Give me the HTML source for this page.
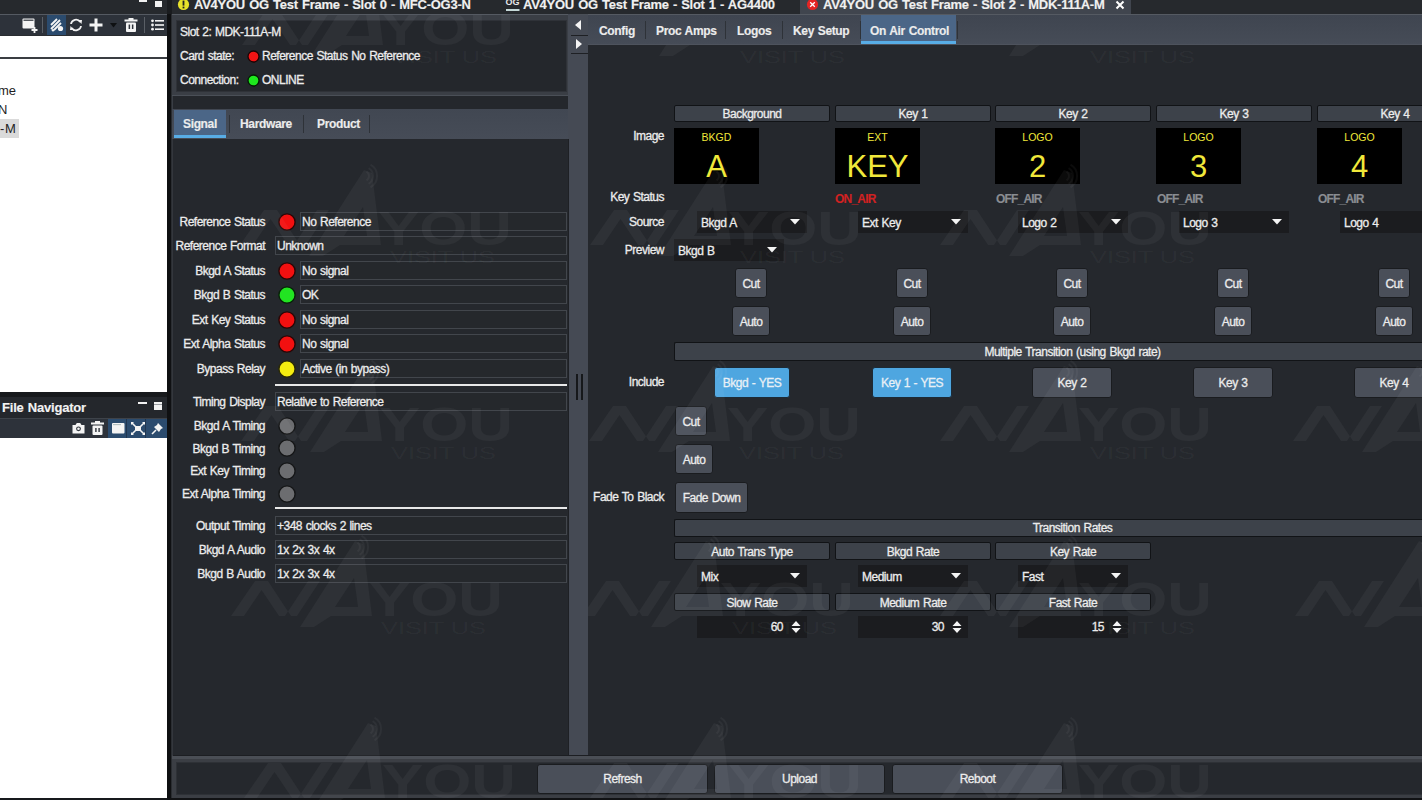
<!DOCTYPE html>
<html><head><meta charset="utf-8"><style>
html,body{margin:0;padding:0;}
body{width:1422px;height:800px;overflow:hidden;position:relative;background:#25282d;font-family:"Liberation Sans",sans-serif;}
div{position:absolute;box-sizing:border-box;}
.t{white-space:nowrap;color:#ececec;font-size:12px;line-height:14px;letter-spacing:-0.5px;word-spacing:0.8px;-webkit-text-stroke:0.3px;}
.b{font-weight:bold;letter-spacing:-0.35px;-webkit-text-stroke:0.15px;}
svg{position:absolute;}
</style></head><body>

<div style="left:0px;top:0px;width:1422px;height:14px;background:#26292d;"></div>
<div style="left:167px;top:0px;width:5px;height:14px;background:#1a1c1f;"></div>
<div style="left:800px;top:0px;width:331px;height:14px;background:#40454e;"></div>
<div style="left:139px;top:0px;width:8px;height:1.5px;background:#f2f2f2;"></div>
<div style="left:154.5px;top:0.5px;width:7.5px;height:6.5px;background:#f2f2f2;"></div>
<svg style="left:177px;top:-2px" width="13" height="13" viewBox="0 0 13 13"><circle cx="6.5" cy="6.5" r="5.6" fill="#e8e22a"/><rect x="5.6" y="2.6" width="1.8" height="5" fill="#222"/><rect x="5.6" y="8.6" width="1.8" height="1.8" fill="#222"/></svg>
<div class="t b" style="left:194px;top:-4px;font-size:13px;line-height:16px;color:#f0f0f0;letter-spacing:-0.25px;margin-top:1px;">AV4YOU OG Test Frame - Slot 0 - MFC-OG3-N</div>
<svg style="left:505px;top:0px" width="16" height="12" viewBox="0 0 16 12"><text x="0.5" y="4.8" font-family="Liberation Sans" font-weight="bold" font-size="9.5" fill="#e8e8e8" textLength="14" lengthAdjust="spacingAndGlyphs">OG</text><rect x="1" y="9" width="13.5" height="2" fill="#c5d8d8"/></svg>
<div class="t b" style="left:523px;top:-4px;font-size:13px;line-height:16px;color:#f0f0f0;letter-spacing:-0.25px;margin-top:1px;">AV4YOU OG Test Frame - Slot 1 - AG4400</div>
<svg style="left:806px;top:-2px" width="13" height="13" viewBox="0 0 13 13"><circle cx="6.5" cy="6.5" r="5.6" fill="#e42424"/><path d="M4.2 4.2 L8.8 8.8 M8.8 4.2 L4.2 8.8" stroke="#fff" stroke-width="1.3"/></svg>
<div class="t b" style="left:823px;top:-4px;font-size:13px;line-height:16px;color:#f0f0f0;letter-spacing:-0.25px;margin-top:1px;">AV4YOU OG Test Frame - Slot 2 - MDK-111A-M</div>
<svg style="left:1115px;top:0px" width="10" height="10" viewBox="0 0 10 10"><path d="M1.5 1.5 L8.5 8.5 M8.5 1.5 L1.5 8.5" stroke="#fff" stroke-width="2"/></svg>
<div style="left:0px;top:14px;width:167px;height:1px;background:#555a62;"></div>
<div style="left:0px;top:15px;width:167px;height:20px;background:#2d323a;"></div>
<div style="left:0px;top:35px;width:167px;height:763px;background:#ffffff;"></div>
<div style="left:0px;top:35px;width:167px;height:1px;background:#2a2d31;"></div>
<div style="left:167px;top:14px;width:4px;height:786px;background:#0f1012;"></div>
<div style="left:171px;top:14px;width:1px;height:786px;background:#2a2d31;"></div>
<div style="left:0px;top:798px;width:172px;height:2px;background:#17191c;"></div>
<div style="left:0px;top:57px;width:167px;height:2px;background:#3a3d42;"></div>
<svg style="left:22px;top:18px" width="16" height="15" viewBox="0 0 16 15"><rect x="0.5" y="0.5" width="12" height="10" rx="1" fill="#f4f4f4"/><rect x="1.5" y="1.6" width="10" height="1.2" fill="#2d323a"/><path d="M12.5 9 v6 M9.5 12 h6" stroke="#f4f4f4" stroke-width="1.8"/></svg>
<div style="left:42px;top:17px;width:1px;height:16px;background:#5a5f66;"></div>
<div style="left:47px;top:15px;width:19px;height:20px;background:#2b4b6e;"></div>
<svg style="left:50px;top:18px" width="14" height="14" viewBox="0 0 14 14"><path d="M1 7 L7 1 M1 11 L10 2 M4 12 L11 5" stroke="#f4f4f4" stroke-width="1.8" fill="none"/><circle cx="10.5" cy="10.5" r="2.6" fill="#f4f4f4"/><circle cx="3" cy="12.2" r="1.2" fill="#f4f4f4"/></svg>
<svg style="left:69px;top:18px" width="14" height="14" viewBox="0 0 14 14"><path d="M2 6 A5 5 0 0 1 11.2 4" stroke="#f4f4f4" stroke-width="1.8" fill="none"/><path d="M12 8 A5 5 0 0 1 2.8 10" stroke="#f4f4f4" stroke-width="1.8" fill="none"/><path d="M9 2 L13 2 L12.5 6 Z" fill="#f4f4f4"/><path d="M5 12 L1 12 L1.5 8 Z" fill="#f4f4f4"/></svg>
<svg style="left:89px;top:18px" width="14" height="14" viewBox="0 0 14 14"><path d="M7 0.5 V13.5 M0.5 7 H13.5" stroke="#f4f4f4" stroke-width="3"/></svg>
<svg style="left:110px;top:23px" width="8" height="5" viewBox="0 0 8 5"><path d="M0 0 H7 L3.5 4.5 Z" fill="#0e1012"/></svg>
<svg style="left:124px;top:18px" width="14" height="14" viewBox="0 0 14 14"><rect x="0.5" y="1.5" width="13" height="2" fill="#f4f4f4"/><rect x="4.5" y="0" width="5" height="2" fill="#f4f4f4"/><rect x="2" y="4.5" width="10" height="9.5" rx="1" fill="#f4f4f4"/><rect x="4.6" y="6.5" width="1.5" height="4.5" fill="#2d323a"/><rect x="7.9" y="6.5" width="1.5" height="4.5" fill="#2d323a"/></svg>
<div style="left:144px;top:17px;width:1px;height:16px;background:#5a5f66;"></div>
<svg style="left:151px;top:19px" width="13" height="12" viewBox="0 0 13 12"><circle cx="1.5" cy="1.8" r="1.4" fill="#f4f4f4"/><circle cx="1.5" cy="6" r="1.4" fill="#f4f4f4"/><circle cx="1.5" cy="10.2" r="1.4" fill="#f4f4f4"/><rect x="4" y="1" width="9" height="1.6" fill="#f4f4f4"/><rect x="4" y="5.2" width="9" height="1.6" fill="#f4f4f4"/><rect x="4" y="9.4" width="9" height="1.6" fill="#f4f4f4"/></svg>
<div class="t" style="left:-2px;top:83px;font-size:13px;line-height:15px;color:#1e1e1e;letter-spacing:-0.2px;-webkit-text-stroke:0;">me</div>
<div class="t" style="left:-2px;top:102px;font-size:13px;line-height:15px;color:#1e1e1e;letter-spacing:0;-webkit-text-stroke:0;">N</div>
<div style="left:0px;top:119px;width:19px;height:19px;background:#dadada;"></div>
<div class="t" style="left:0px;top:121px;font-size:13px;line-height:15px;color:#1e1e1e;letter-spacing:0.6px;-webkit-text-stroke:0;">-M</div>
<div style="left:0px;top:392px;width:167px;height:5px;background:#17191c;"></div>
<div style="left:0px;top:397px;width:167px;height:21px;background:#24272c;"></div>
<div class="t b" style="left:2px;top:400px;font-size:13px;line-height:15px;color:#f2f2f2;letter-spacing:-0.2px;">File Navigator</div>
<div style="left:138px;top:402px;width:9px;height:2px;background:#f2f2f2;"></div>
<div style="left:154px;top:402px;width:8px;height:8px;background:#f2f2f2;"></div>
<div style="left:154px;top:404px;width:8px;height:1px;background:#9a9da2;"></div>
<div style="left:0px;top:418px;width:167px;height:1px;background:#3e434a;"></div>
<div style="left:0px;top:419px;width:167px;height:19px;background:#2d323a;"></div>
<div style="left:108px;top:419px;width:59px;height:19px;background:#2b4b6e;"></div>
<svg style="left:72px;top:422px" width="13" height="12" viewBox="0 0 13 12"><path d="M0.5 3 H3.5 L4.8 1 H8.2 L9.5 3 H12.5 V11.5 H0.5 Z" fill="#f4f4f4"/><circle cx="6.5" cy="6.8" r="2.4" fill="#2d323a"/><circle cx="6.5" cy="6.8" r="1.3" fill="#f4f4f4"/></svg>
<svg style="left:91px;top:421px" width="13" height="14" viewBox="0 0 13 14"><rect x="0" y="1.5" width="13" height="2" fill="#f4f4f4"/><rect x="4" y="0" width="5" height="2" fill="#f4f4f4"/><rect x="1.5" y="4.5" width="10" height="9.5" rx="1" fill="#f4f4f4"/><rect x="4.2" y="7" width="1.4" height="4" fill="#2d323a"/><rect x="7.4" y="7" width="1.4" height="4" fill="#2d323a"/></svg>
<svg style="left:112px;top:423px" width="13" height="11" viewBox="0 0 13 11"><rect x="0" y="0" width="12.5" height="10.5" rx="1" fill="#f4f4f4"/><rect x="1" y="1.3" width="8" height="0.8" fill="#9aa"/></svg>
<svg style="left:131px;top:422px" width="14" height="13" viewBox="0 0 14 13"><path d="M1 1 L5 5 M13 1 L9 5 M1 12 L5 8 M13 12 L9 8" stroke="#f4f4f4" stroke-width="1.6"/><rect x="4" y="4" width="6" height="5" fill="#f4f4f4"/><path d="M0 0 H3 L0 3Z M14 0 H11 L14 3Z M0 13 H3 L0 10Z M14 13 H11 L14 10Z" fill="#f4f4f4"/></svg>
<div style="left:126px;top:419px;width:1px;height:19px;background:#20354f;"></div>
<div style="left:145px;top:419px;width:1px;height:19px;background:#20354f;"></div>
<svg style="left:151px;top:422px" width="13" height="13" viewBox="0 0 13 13"><path d="M7 1 L12 6 L10 7 L8 10 L3 5 L6 3 Z" fill="#f4f4f4"/><path d="M5 8 L1 12" stroke="#f4f4f4" stroke-width="1.6"/></svg>
<div style="left:172px;top:14px;width:398px;height:1px;background:#555a62;"></div>
<div style="left:172px;top:15px;width:398px;height:82px;background:#3a3e45;"></div>
<div style="left:176px;top:20px;width:391px;height:72px;background:#24272c;border:1px solid #2f3238;"></div>
<div class="t" style="left:180px;top:25px;">Slot 2: MDK-111A-M</div>
<div class="t" style="left:180px;top:49px;">Card state:</div>
<svg style="left:247px;top:50px" width="13" height="13" viewBox="0 0 13 13"><circle cx="6.5" cy="6.5" r="5.5" fill="#f21414" stroke="#1a0404" stroke-width="1.3"/></svg>
<div class="t" style="left:262px;top:49px;">Reference Status No Reference</div>
<div class="t" style="left:180px;top:73px;">Connection:</div>
<svg style="left:247px;top:74px" width="13" height="13" viewBox="0 0 13 13"><circle cx="6.5" cy="6.5" r="5.5" fill="#1ee81e" stroke="#041a04" stroke-width="1.3"/></svg>
<div class="t" style="left:262px;top:73px;">ONLINE</div>
<div style="left:172px;top:95px;width:398px;height:1px;background:#4a4f57;"></div>
<div style="left:172px;top:96px;width:398px;height:13px;background:#3a3e45;"></div>
<div style="left:173px;top:96px;width:397px;height:13px;background:#24272c;"></div>
<div style="left:172px;top:109px;width:398px;height:30px;background:linear-gradient(#414752,#464c57);"></div>
<div style="left:174px;top:110px;width:52px;height:28px;background:#4b6687;"></div>
<div style="left:174px;top:135px;width:52px;height:3px;background:#58ade6;"></div>
<div style="left:229px;top:115px;width:1px;height:18px;background:#2e3238;"></div>
<div style="left:303px;top:115px;width:1px;height:18px;background:#2e3238;"></div>
<div style="left:369px;top:115px;width:1px;height:18px;background:#2e3238;"></div>
<div class="t b" style="left:183px;top:117px;">Signal</div>
<div class="t b" style="left:240px;top:117px;">Hardware</div>
<div class="t b" style="left:317px;top:117px;">Product</div>
<div style="left:172px;top:139px;width:398px;height:616px;background:#25282d;"></div>
<div style="left:172px;top:139px;width:1px;height:616px;background:#34373d;"></div>
<div class="t" style="right:1157px;top:215px;">Reference Status</div>
<svg style="left:278px;top:212.5px" width="18" height="18" viewBox="0 0 18 18"><circle cx="9" cy="9" r="8.1" fill="#f21010" stroke="#2a0606" stroke-width="1.4"/></svg>
<div style="left:300px;top:212px;width:267px;height:19px;border:1px solid #42464c;background:#25282c;"></div>
<div class="t" style="left:302px;top:215px;">No Reference</div>
<div class="t" style="right:1157px;top:239px;">Reference Format</div>
<div style="left:275px;top:236px;width:292px;height:19px;border:1px solid #42464c;background:#25282c;"></div>
<div class="t" style="left:277px;top:239px;">Unknown</div>
<div class="t" style="right:1157px;top:264px;">Bkgd A Status</div>
<svg style="left:278px;top:261.5px" width="18" height="18" viewBox="0 0 18 18"><circle cx="9" cy="9" r="8.1" fill="#f21010" stroke="#2a0606" stroke-width="1.4"/></svg>
<div style="left:300px;top:261px;width:267px;height:19px;border:1px solid #42464c;background:#25282c;"></div>
<div class="t" style="left:302px;top:264px;">No signal</div>
<div class="t" style="right:1157px;top:288px;">Bkgd B Status</div>
<svg style="left:278px;top:285.5px" width="18" height="18" viewBox="0 0 18 18"><circle cx="9" cy="9" r="8.1" fill="#22e422" stroke="#082208" stroke-width="1.4"/></svg>
<div style="left:300px;top:285px;width:267px;height:19px;border:1px solid #42464c;background:#25282c;"></div>
<div class="t" style="left:302px;top:288px;">OK</div>
<div class="t" style="right:1157px;top:313px;">Ext Key Status</div>
<svg style="left:278px;top:310.5px" width="18" height="18" viewBox="0 0 18 18"><circle cx="9" cy="9" r="8.1" fill="#f21010" stroke="#2a0606" stroke-width="1.4"/></svg>
<div style="left:300px;top:310px;width:267px;height:19px;border:1px solid #42464c;background:#25282c;"></div>
<div class="t" style="left:302px;top:313px;">No signal</div>
<div class="t" style="right:1157px;top:337px;">Ext Alpha Status</div>
<svg style="left:278px;top:334.5px" width="18" height="18" viewBox="0 0 18 18"><circle cx="9" cy="9" r="8.1" fill="#f21010" stroke="#2a0606" stroke-width="1.4"/></svg>
<div style="left:300px;top:334px;width:267px;height:19px;border:1px solid #42464c;background:#25282c;"></div>
<div class="t" style="left:302px;top:337px;">No signal</div>
<div class="t" style="right:1157px;top:362px;">Bypass Relay</div>
<svg style="left:278px;top:359.5px" width="18" height="18" viewBox="0 0 18 18"><circle cx="9" cy="9" r="8.1" fill="#f4ec10" stroke="#2a2806" stroke-width="1.4"/></svg>
<div style="left:300px;top:359px;width:267px;height:19px;border:1px solid #42464c;background:#25282c;"></div>
<div class="t" style="left:302px;top:362px;">Active (in bypass)</div>
<div class="t" style="right:1157px;top:395px;">Timing Display</div>
<div style="left:275px;top:392px;width:292px;height:19px;border:1px solid #42464c;background:#25282c;"></div>
<div class="t" style="left:277px;top:395px;">Relative to Reference</div>
<div class="t" style="right:1157px;top:419px;">Bkgd A Timing</div>
<svg style="left:278px;top:416.5px" width="18" height="18" viewBox="0 0 18 18"><circle cx="9" cy="9" r="8.1" fill="#6c6d70" stroke="#151617" stroke-width="1.4"/></svg>
<div class="t" style="right:1157px;top:441.5px;">Bkgd B Timing</div>
<svg style="left:278px;top:439.0px" width="18" height="18" viewBox="0 0 18 18"><circle cx="9" cy="9" r="8.1" fill="#6c6d70" stroke="#151617" stroke-width="1.4"/></svg>
<div class="t" style="right:1157px;top:464px;">Ext Key Timing</div>
<svg style="left:278px;top:461.5px" width="18" height="18" viewBox="0 0 18 18"><circle cx="9" cy="9" r="8.1" fill="#6c6d70" stroke="#151617" stroke-width="1.4"/></svg>
<div class="t" style="right:1157px;top:487px;">Ext Alpha Timing</div>
<svg style="left:278px;top:484.5px" width="18" height="18" viewBox="0 0 18 18"><circle cx="9" cy="9" r="8.1" fill="#6c6d70" stroke="#151617" stroke-width="1.4"/></svg>
<div class="t" style="right:1157px;top:519px;">Output Timing</div>
<div style="left:275px;top:516px;width:292px;height:19px;border:1px solid #42464c;background:#25282c;"></div>
<div class="t" style="left:277px;top:519px;">+348 clocks 2 lines</div>
<div class="t" style="right:1157px;top:543px;">Bkgd A Audio</div>
<div style="left:275px;top:540px;width:292px;height:19px;border:1px solid #42464c;background:#25282c;"></div>
<div class="t" style="left:277px;top:543px;">1x 2x 3x 4x</div>
<div class="t" style="right:1157px;top:567px;">Bkgd B Audio</div>
<div style="left:275px;top:564px;width:292px;height:19px;border:1px solid #42464c;background:#25282c;"></div>
<div class="t" style="left:277px;top:567px;">1x 2x 3x 4x</div>
<div style="left:275px;top:384px;width:292px;height:2px;background:#e8e8e8;"></div>
<div style="left:275px;top:507px;width:292px;height:2px;background:#e8e8e8;"></div>
<div style="left:568px;top:14px;width:21px;height:741px;background:#454a54;"></div>
<div style="left:568px;top:139px;width:1px;height:616px;background:#1e2024;"></div>
<div style="left:588px;top:45px;width:1px;height:710px;background:#1f2226;"></div>
<div style="left:570px;top:14px;width:18px;height:1px;background:#4a4f57;"></div>
<div style="left:576px;top:374px;width:1.5px;height:26px;background:#16181b;"></div>
<div style="left:581px;top:374px;width:1.5px;height:26px;background:#16181b;"></div>
<svg style="left:575px;top:20px" width="8" height="10" viewBox="0 0 8 10"><path d="M6 0 V10 L0 5 Z" fill="#f4f4f4"/></svg>
<div style="left:571px;top:35px;width:17px;height:1px;background:#1e2024;"></div>
<svg style="left:576px;top:39px" width="8" height="10" viewBox="0 0 8 10"><path d="M0 0 V10 L6 5 Z" fill="#f4f4f4"/></svg>
<div style="left:571px;top:53px;width:17px;height:1px;background:#1e2024;"></div>
<div style="left:588px;top:14px;width:834px;height:1px;background:#555a62;"></div>
<div style="left:588px;top:15px;width:834px;height:30px;background:linear-gradient(#3f4550,#464c57);"></div>
<div style="left:588px;top:44px;width:834px;height:1px;background:#4e535d;"></div>
<div style="left:861px;top:15px;width:95px;height:29px;background:#4b6687;"></div>
<div style="left:861px;top:41px;width:95px;height:3px;background:#58ade6;"></div>
<div style="left:645px;top:21px;width:1px;height:18px;background:#2e3238;"></div>
<div style="left:725px;top:21px;width:1px;height:18px;background:#2e3238;"></div>
<div style="left:782px;top:21px;width:1px;height:18px;background:#2e3238;"></div>
<div style="left:860px;top:21px;width:1px;height:18px;background:#2e3238;"></div>
<div style="left:957px;top:21px;width:1px;height:18px;background:#2e3238;"></div>
<div class="t b" style="left:599px;top:24px;">Config</div>
<div class="t b" style="left:656px;top:24px;">Proc Amps</div>
<div class="t b" style="left:737px;top:24px;">Logos</div>
<div class="t b" style="left:793px;top:24px;">Key Setup</div>
<div class="t b" style="left:870px;top:24px;">On Air Control</div>
<div style="left:588px;top:45px;width:834px;height:710px;background:#25282d;"></div>
<div style="left:674px;top:105px;width:156px;height:17px;background:#3d424a;border:1px solid #111316;border-radius:2px;"></div>
<div class="t" style="left:674px;top:107px;width:156px;text-align:center;">Background</div>
<div style="left:674px;top:128px;width:85px;height:56px;background:#000;"></div>
<div class="t" style="left:674px;top:131px;width:85px;text-align:center;color:#f0e83a;font-size:10.5px;line-height:12px;letter-spacing:0px;-webkit-text-stroke:0;">BKGD</div>
<div class="t" style="left:674px;top:150px;width:85px;text-align:center;color:#f0e83a;font-size:31px;line-height:34px;letter-spacing:0;-webkit-text-stroke:0;">A</div>
<div style="left:835px;top:105px;width:156px;height:17px;background:#3d424a;border:1px solid #111316;border-radius:2px;"></div>
<div class="t" style="left:835px;top:107px;width:156px;text-align:center;">Key 1</div>
<div style="left:835px;top:128px;width:85px;height:56px;background:#000;"></div>
<div class="t" style="left:835px;top:131px;width:85px;text-align:center;color:#f0e83a;font-size:10.5px;line-height:12px;letter-spacing:0px;-webkit-text-stroke:0;">EXT</div>
<div class="t" style="left:835px;top:150px;width:85px;text-align:center;color:#f0e83a;font-size:31px;line-height:34px;letter-spacing:0;-webkit-text-stroke:0;">KEY</div>
<div style="left:995px;top:105px;width:156px;height:17px;background:#3d424a;border:1px solid #111316;border-radius:2px;"></div>
<div class="t" style="left:995px;top:107px;width:156px;text-align:center;">Key 2</div>
<div style="left:995px;top:128px;width:85px;height:56px;background:#000;"></div>
<div class="t" style="left:995px;top:131px;width:85px;text-align:center;color:#f0e83a;font-size:10.5px;line-height:12px;letter-spacing:0px;-webkit-text-stroke:0;">LOGO</div>
<div class="t" style="left:995px;top:150px;width:85px;text-align:center;color:#f0e83a;font-size:31px;line-height:34px;letter-spacing:0;-webkit-text-stroke:0;">2</div>
<div style="left:1156px;top:105px;width:156px;height:17px;background:#3d424a;border:1px solid #111316;border-radius:2px;"></div>
<div class="t" style="left:1156px;top:107px;width:156px;text-align:center;">Key 3</div>
<div style="left:1156px;top:128px;width:85px;height:56px;background:#000;"></div>
<div class="t" style="left:1156px;top:131px;width:85px;text-align:center;color:#f0e83a;font-size:10.5px;line-height:12px;letter-spacing:0px;-webkit-text-stroke:0;">LOGO</div>
<div class="t" style="left:1156px;top:150px;width:85px;text-align:center;color:#f0e83a;font-size:31px;line-height:34px;letter-spacing:0;-webkit-text-stroke:0;">3</div>
<div style="left:1317px;top:105px;width:156px;height:17px;background:#3d424a;border:1px solid #111316;border-radius:2px;"></div>
<div class="t" style="left:1317px;top:107px;width:156px;text-align:center;">Key 4</div>
<div style="left:1317px;top:128px;width:85px;height:56px;background:#000;"></div>
<div class="t" style="left:1317px;top:131px;width:85px;text-align:center;color:#f0e83a;font-size:10.5px;line-height:12px;letter-spacing:0px;-webkit-text-stroke:0;">LOGO</div>
<div class="t" style="left:1317px;top:150px;width:85px;text-align:center;color:#f0e83a;font-size:31px;line-height:34px;letter-spacing:0;-webkit-text-stroke:0;">4</div>
<div class="t" style="right:758px;top:129px;">Image</div>
<div class="t" style="right:758px;top:190px;">Key Status</div>
<div class="t b" style="left:835px;top:192px;color:#d02222;font-size:12px;letter-spacing:-0.8px;">ON_AIR</div>
<div class="t b" style="left:996px;top:192px;color:#8a8d92;letter-spacing:-0.8px;">OFF_AIR</div>
<div class="t b" style="left:1157px;top:192px;color:#8a8d92;letter-spacing:-0.8px;">OFF_AIR</div>
<div class="t b" style="left:1318px;top:192px;color:#8a8d92;letter-spacing:-0.8px;">OFF_AIR</div>
<div class="t" style="right:758px;top:215px;">Source</div>
<div style="left:697px;top:211px;width:110px;height:22px;background:#1b1c1f;"></div>
<div class="t" style="left:701px;top:216px;">Bkgd A</div>
<svg style="left:790px;top:219px" width="10" height="6" viewBox="0 0 10 6"><path d="M0 0 H10 L5 5.5 Z" fill="#f4f4f4"/></svg>
<div style="left:858px;top:211px;width:110px;height:22px;background:#1b1c1f;"></div>
<div class="t" style="left:862px;top:216px;">Ext Key</div>
<svg style="left:951px;top:219px" width="10" height="6" viewBox="0 0 10 6"><path d="M0 0 H10 L5 5.5 Z" fill="#f4f4f4"/></svg>
<div style="left:1018px;top:211px;width:110px;height:22px;background:#1b1c1f;"></div>
<div class="t" style="left:1022px;top:216px;">Logo 2</div>
<svg style="left:1111px;top:219px" width="10" height="6" viewBox="0 0 10 6"><path d="M0 0 H10 L5 5.5 Z" fill="#f4f4f4"/></svg>
<div style="left:1179px;top:211px;width:110px;height:22px;background:#1b1c1f;"></div>
<div class="t" style="left:1183px;top:216px;">Logo 3</div>
<svg style="left:1272px;top:219px" width="10" height="6" viewBox="0 0 10 6"><path d="M0 0 H10 L5 5.5 Z" fill="#f4f4f4"/></svg>
<div style="left:1340px;top:211px;width:110px;height:22px;background:#1b1c1f;"></div>
<div class="t" style="left:1344px;top:216px;">Logo 4</div>
<svg style="left:1433px;top:219px" width="10" height="6" viewBox="0 0 10 6"><path d="M0 0 H10 L5 5.5 Z" fill="#f4f4f4"/></svg>
<div class="t" style="right:758px;top:243px;">Preview</div>
<div style="left:674px;top:239px;width:110px;height:22px;background:#1b1c1f;"></div>
<div class="t" style="left:678px;top:244px;">Bkgd B</div>
<svg style="left:767px;top:247px" width="10" height="6" viewBox="0 0 10 6"><path d="M0 0 H10 L5 5.5 Z" fill="#f4f4f4"/></svg>
<div style="left:735px;top:268px;width:32px;height:30px;background:#4a4f59;border:1px solid #1a1c1f;border-radius:3px;"></div>
<div class="t" style="left:735px;top:277px;width:32px;text-align:center;">Cut</div>
<div style="left:732px;top:306px;width:38px;height:30px;background:#4a4f59;border:1px solid #1a1c1f;border-radius:3px;"></div>
<div class="t" style="left:732px;top:315px;width:38px;text-align:center;">Auto</div>
<div style="left:896px;top:268px;width:32px;height:30px;background:#4a4f59;border:1px solid #1a1c1f;border-radius:3px;"></div>
<div class="t" style="left:896px;top:277px;width:32px;text-align:center;">Cut</div>
<div style="left:893px;top:306px;width:38px;height:30px;background:#4a4f59;border:1px solid #1a1c1f;border-radius:3px;"></div>
<div class="t" style="left:893px;top:315px;width:38px;text-align:center;">Auto</div>
<div style="left:1056px;top:268px;width:32px;height:30px;background:#4a4f59;border:1px solid #1a1c1f;border-radius:3px;"></div>
<div class="t" style="left:1056px;top:277px;width:32px;text-align:center;">Cut</div>
<div style="left:1053px;top:306px;width:38px;height:30px;background:#4a4f59;border:1px solid #1a1c1f;border-radius:3px;"></div>
<div class="t" style="left:1053px;top:315px;width:38px;text-align:center;">Auto</div>
<div style="left:1217px;top:268px;width:32px;height:30px;background:#4a4f59;border:1px solid #1a1c1f;border-radius:3px;"></div>
<div class="t" style="left:1217px;top:277px;width:32px;text-align:center;">Cut</div>
<div style="left:1214px;top:306px;width:38px;height:30px;background:#4a4f59;border:1px solid #1a1c1f;border-radius:3px;"></div>
<div class="t" style="left:1214px;top:315px;width:38px;text-align:center;">Auto</div>
<div style="left:1378px;top:268px;width:32px;height:30px;background:#4a4f59;border:1px solid #1a1c1f;border-radius:3px;"></div>
<div class="t" style="left:1378px;top:277px;width:32px;text-align:center;">Cut</div>
<div style="left:1375px;top:306px;width:38px;height:30px;background:#4a4f59;border:1px solid #1a1c1f;border-radius:3px;"></div>
<div class="t" style="left:1375px;top:315px;width:38px;text-align:center;">Auto</div>
<div style="left:674px;top:342px;width:748px;height:19px;background:#3d424a;border:1px solid #111316;border-right:none;border-radius:2px 0 0 2px;"></div>
<div class="t" style="left:674px;top:345px;width:797px;text-align:center;">Multiple Transition (using Bkgd rate)</div>
<div class="t" style="right:758px;top:375px;">Include</div>
<div style="left:714px;top:367px;width:76px;height:31px;background:#4ea6e0;border:1px solid #1c2a36;border-radius:3px;"></div>
<div class="t" style="left:714px;top:376px;width:76px;text-align:center;color:#e8f0f6;">Bkgd - YES</div>
<div style="left:872px;top:367px;width:80px;height:31px;background:#4ea6e0;border:1px solid #1c2a36;border-radius:3px;"></div>
<div class="t" style="left:872px;top:376px;width:80px;text-align:center;color:#e8f0f6;">Key 1 - YES</div>
<div style="left:1032px;top:367px;width:80px;height:31px;background:#4a4f59;border:1px solid #1a1c1f;border-radius:3px;"></div>
<div class="t" style="left:1032px;top:376px;width:80px;text-align:center;">Key 2</div>
<div style="left:1193px;top:367px;width:80px;height:31px;background:#4a4f59;border:1px solid #1a1c1f;border-radius:3px;"></div>
<div class="t" style="left:1193px;top:376px;width:80px;text-align:center;">Key 3</div>
<div style="left:1354px;top:367px;width:80px;height:31px;background:#4a4f59;border:1px solid #1a1c1f;border-radius:3px;"></div>
<div class="t" style="left:1354px;top:376px;width:80px;text-align:center;">Key 4</div>
<div style="left:675px;top:406px;width:32px;height:30px;background:#4a4f59;border:1px solid #1a1c1f;border-radius:3px;"></div>
<div class="t" style="left:675px;top:415px;width:32px;text-align:center;">Cut</div>
<div style="left:675px;top:444px;width:38px;height:30px;background:#4a4f59;border:1px solid #1a1c1f;border-radius:3px;"></div>
<div class="t" style="left:675px;top:453px;width:38px;text-align:center;">Auto</div>
<div class="t" style="right:758px;top:490px;">Fade To Black</div>
<div style="left:675px;top:482px;width:73px;height:31px;background:#4a4f59;border:1px solid #1a1c1f;border-radius:3px;"></div>
<div class="t" style="left:675px;top:491px;width:73px;text-align:center;">Fade Down</div>
<div style="left:674px;top:519px;width:748px;height:18px;background:#3d424a;border:1px solid #111316;border-right:none;border-radius:2px 0 0 2px;"></div>
<div class="t" style="left:674px;top:521px;width:797px;text-align:center;">Transition Rates</div>
<div style="left:674px;top:542px;width:156px;height:18px;background:#3d424a;border:1px solid #111316;border-radius:2px;"></div>
<div class="t" style="left:674px;top:545px;width:156px;text-align:center;">Auto Trans Type</div>
<div style="left:697px;top:565px;width:110px;height:22px;background:#1b1c1f;"></div>
<div class="t" style="left:701px;top:570px;">Mix</div>
<svg style="left:790px;top:573px" width="10" height="6" viewBox="0 0 10 6"><path d="M0 0 H10 L5 5.5 Z" fill="#f4f4f4"/></svg>
<div style="left:835px;top:542px;width:156px;height:18px;background:#3d424a;border:1px solid #111316;border-radius:2px;"></div>
<div class="t" style="left:835px;top:545px;width:156px;text-align:center;">Bkgd Rate</div>
<div style="left:858px;top:565px;width:110px;height:22px;background:#1b1c1f;"></div>
<div class="t" style="left:862px;top:570px;">Medium</div>
<svg style="left:951px;top:573px" width="10" height="6" viewBox="0 0 10 6"><path d="M0 0 H10 L5 5.5 Z" fill="#f4f4f4"/></svg>
<div style="left:995px;top:542px;width:156px;height:18px;background:#3d424a;border:1px solid #111316;border-radius:2px;"></div>
<div class="t" style="left:995px;top:545px;width:156px;text-align:center;">Key Rate</div>
<div style="left:1018px;top:565px;width:110px;height:22px;background:#1b1c1f;"></div>
<div class="t" style="left:1022px;top:570px;">Fast</div>
<svg style="left:1111px;top:573px" width="10" height="6" viewBox="0 0 10 6"><path d="M0 0 H10 L5 5.5 Z" fill="#f4f4f4"/></svg>
<div style="left:674px;top:593px;width:156px;height:18px;background:#3d424a;border:1px solid #111316;border-radius:2px;"></div>
<div class="t" style="left:674px;top:596px;width:156px;text-align:center;">Slow Rate</div>
<div style="left:697px;top:616px;width:110px;height:22px;background:#1b1c1f;"></div>
<div class="t" style="right:639px;top:620px;">60</div>
<svg style="left:791px;top:620px" width="10" height="14" viewBox="0 0 10 14"><path d="M0.5 6 L5 1 L9.5 6 Z M0.5 8 L5 13 L9.5 8 Z" fill="#f4f4f4"/></svg>
<div style="left:835px;top:593px;width:156px;height:18px;background:#3d424a;border:1px solid #111316;border-radius:2px;"></div>
<div class="t" style="left:835px;top:596px;width:156px;text-align:center;">Medium Rate</div>
<div style="left:858px;top:616px;width:110px;height:22px;background:#1b1c1f;"></div>
<div class="t" style="right:478px;top:620px;">30</div>
<svg style="left:952px;top:620px" width="10" height="14" viewBox="0 0 10 14"><path d="M0.5 6 L5 1 L9.5 6 Z M0.5 8 L5 13 L9.5 8 Z" fill="#f4f4f4"/></svg>
<div style="left:995px;top:593px;width:156px;height:18px;background:#3d424a;border:1px solid #111316;border-radius:2px;"></div>
<div class="t" style="left:995px;top:596px;width:156px;text-align:center;">Fast Rate</div>
<div style="left:1018px;top:616px;width:110px;height:22px;background:#1b1c1f;"></div>
<div class="t" style="right:318px;top:620px;">15</div>
<svg style="left:1112px;top:620px" width="10" height="14" viewBox="0 0 10 14"><path d="M0.5 6 L5 1 L9.5 6 Z M0.5 8 L5 13 L9.5 8 Z" fill="#f4f4f4"/></svg>
<div style="left:172px;top:755px;width:1250px;height:45px;background:#3b3e44;"></div>
<div style="left:173px;top:755px;width:1249px;height:1px;background:#1c1e22;"></div>
<div style="left:172px;top:756px;width:1250px;height:3px;background:#4a4e55;"></div>
<div style="left:176px;top:762px;width:1246px;height:33px;background:#25282d;border:1px solid #2e3136;border-right:none;"></div>
<div style="left:167px;top:798px;width:1255px;height:2px;background:#111214;"></div>
<div style="left:537px;top:764px;width:171px;height:30px;background:#4a4f59;border:1px solid #1a1c1f;border-radius:3px;"></div>
<div class="t" style="left:537px;top:772px;width:171px;text-align:center;">Refresh</div>
<div style="left:714px;top:764px;width:171px;height:30px;background:#4a4f59;border:1px solid #1a1c1f;border-radius:3px;"></div>
<div class="t" style="left:714px;top:772px;width:171px;text-align:center;">Upload</div>
<div style="left:892px;top:764px;width:171px;height:30px;background:#4a4f59;border:1px solid #1a1c1f;border-radius:3px;"></div>
<div class="t" style="left:892px;top:772px;width:171px;text-align:center;">Reboot</div>
<svg style="left:0;top:0;pointer-events:none" width="1422" height="800" viewBox="0 0 1422 800"><defs><clipPath id="wc"><rect x="172" y="15" width="396" height="785"/><rect x="588" y="45" width="834" height="755"/></clipPath></defs><g clip-path="url(#wc)"><g transform="translate(242,10)" fill="#ffffff" fill-opacity="0.045"><path fill-rule="evenodd" d="M0 35 L24 0 L37 0 L60 35 L48 35 L30.5 9 L13 35 Z M54 35 L66 35 L89 0 L77 0 Z M69 46 L124 -40 L132 -37 L141 35 L100 35 L83 46 Z M104 26 L123 -3 L127 26 Z"/><path d="M126.5 -38.3 A5 5 0 0 1 126.5 -29.7 M128.5 -41.8 A9 9 0 0 1 128.5 -26.2 M130.5 -45.3 A13 13 0 0 1 130.5 -22.7" stroke="#fff" stroke-opacity="0.045" stroke-width="2" fill="none"/><text x="138" y="35" font-family="Liberation Sans" font-weight="bold" font-size="48" textLength="134" lengthAdjust="spacingAndGlyphs">YOU</text><text x="150" y="53" font-family="Liberation Sans" font-size="17" textLength="105" lengthAdjust="spacingAndGlyphs">VISIT US</text></g><g transform="translate(590,10)" fill="#ffffff" fill-opacity="0.045"><path fill-rule="evenodd" d="M0 35 L24 0 L37 0 L60 35 L48 35 L30.5 9 L13 35 Z M54 35 L66 35 L89 0 L77 0 Z M69 46 L124 -40 L132 -37 L141 35 L100 35 L83 46 Z M104 26 L123 -3 L127 26 Z"/><path d="M126.5 -38.3 A5 5 0 0 1 126.5 -29.7 M128.5 -41.8 A9 9 0 0 1 128.5 -26.2 M130.5 -45.3 A13 13 0 0 1 130.5 -22.7" stroke="#fff" stroke-opacity="0.045" stroke-width="2" fill="none"/><text x="138" y="35" font-family="Liberation Sans" font-weight="bold" font-size="48" textLength="134" lengthAdjust="spacingAndGlyphs">YOU</text><text x="150" y="53" font-family="Liberation Sans" font-size="17" textLength="105" lengthAdjust="spacingAndGlyphs">VISIT US</text></g><g transform="translate(940,10)" fill="#ffffff" fill-opacity="0.045"><path fill-rule="evenodd" d="M0 35 L24 0 L37 0 L60 35 L48 35 L30.5 9 L13 35 Z M54 35 L66 35 L89 0 L77 0 Z M69 46 L124 -40 L132 -37 L141 35 L100 35 L83 46 Z M104 26 L123 -3 L127 26 Z"/><path d="M126.5 -38.3 A5 5 0 0 1 126.5 -29.7 M128.5 -41.8 A9 9 0 0 1 128.5 -26.2 M130.5 -45.3 A13 13 0 0 1 130.5 -22.7" stroke="#fff" stroke-opacity="0.045" stroke-width="2" fill="none"/><text x="138" y="35" font-family="Liberation Sans" font-weight="bold" font-size="48" textLength="134" lengthAdjust="spacingAndGlyphs">YOU</text><text x="150" y="53" font-family="Liberation Sans" font-size="17" textLength="105" lengthAdjust="spacingAndGlyphs">VISIT US</text></g><g transform="translate(240,210)" fill="#ffffff" fill-opacity="0.045"><path fill-rule="evenodd" d="M0 35 L24 0 L37 0 L60 35 L48 35 L30.5 9 L13 35 Z M54 35 L66 35 L89 0 L77 0 Z M69 46 L124 -40 L132 -37 L141 35 L100 35 L83 46 Z M104 26 L123 -3 L127 26 Z"/><path d="M126.5 -38.3 A5 5 0 0 1 126.5 -29.7 M128.5 -41.8 A9 9 0 0 1 128.5 -26.2 M130.5 -45.3 A13 13 0 0 1 130.5 -22.7" stroke="#fff" stroke-opacity="0.045" stroke-width="2" fill="none"/><text x="138" y="35" font-family="Liberation Sans" font-weight="bold" font-size="48" textLength="134" lengthAdjust="spacingAndGlyphs">YOU</text><text x="150" y="53" font-family="Liberation Sans" font-size="17" textLength="105" lengthAdjust="spacingAndGlyphs">VISIT US</text></g><g transform="translate(590,210)" fill="#ffffff" fill-opacity="0.045"><path fill-rule="evenodd" d="M0 35 L24 0 L37 0 L60 35 L48 35 L30.5 9 L13 35 Z M54 35 L66 35 L89 0 L77 0 Z M69 46 L124 -40 L132 -37 L141 35 L100 35 L83 46 Z M104 26 L123 -3 L127 26 Z"/><path d="M126.5 -38.3 A5 5 0 0 1 126.5 -29.7 M128.5 -41.8 A9 9 0 0 1 128.5 -26.2 M130.5 -45.3 A13 13 0 0 1 130.5 -22.7" stroke="#fff" stroke-opacity="0.045" stroke-width="2" fill="none"/><text x="138" y="35" font-family="Liberation Sans" font-weight="bold" font-size="48" textLength="134" lengthAdjust="spacingAndGlyphs">YOU</text><text x="150" y="53" font-family="Liberation Sans" font-size="17" textLength="105" lengthAdjust="spacingAndGlyphs">VISIT US</text></g><g transform="translate(940,210)" fill="#ffffff" fill-opacity="0.045"><path fill-rule="evenodd" d="M0 35 L24 0 L37 0 L60 35 L48 35 L30.5 9 L13 35 Z M54 35 L66 35 L89 0 L77 0 Z M69 46 L124 -40 L132 -37 L141 35 L100 35 L83 46 Z M104 26 L123 -3 L127 26 Z"/><path d="M126.5 -38.3 A5 5 0 0 1 126.5 -29.7 M128.5 -41.8 A9 9 0 0 1 128.5 -26.2 M130.5 -45.3 A13 13 0 0 1 130.5 -22.7" stroke="#fff" stroke-opacity="0.045" stroke-width="2" fill="none"/><text x="138" y="35" font-family="Liberation Sans" font-weight="bold" font-size="48" textLength="134" lengthAdjust="spacingAndGlyphs">YOU</text><text x="150" y="53" font-family="Liberation Sans" font-size="17" textLength="105" lengthAdjust="spacingAndGlyphs">VISIT US</text></g><g transform="translate(241,406)" fill="#ffffff" fill-opacity="0.045"><path fill-rule="evenodd" d="M0 35 L24 0 L37 0 L60 35 L48 35 L30.5 9 L13 35 Z M54 35 L66 35 L89 0 L77 0 Z M69 46 L124 -40 L132 -37 L141 35 L100 35 L83 46 Z M104 26 L123 -3 L127 26 Z"/><path d="M126.5 -38.3 A5 5 0 0 1 126.5 -29.7 M128.5 -41.8 A9 9 0 0 1 128.5 -26.2 M130.5 -45.3 A13 13 0 0 1 130.5 -22.7" stroke="#fff" stroke-opacity="0.045" stroke-width="2" fill="none"/><text x="138" y="35" font-family="Liberation Sans" font-weight="bold" font-size="48" textLength="134" lengthAdjust="spacingAndGlyphs">YOU</text><text x="150" y="53" font-family="Liberation Sans" font-size="17" textLength="105" lengthAdjust="spacingAndGlyphs">VISIT US</text></g><g transform="translate(589,406)" fill="#ffffff" fill-opacity="0.045"><path fill-rule="evenodd" d="M0 35 L24 0 L37 0 L60 35 L48 35 L30.5 9 L13 35 Z M54 35 L66 35 L89 0 L77 0 Z M69 46 L124 -40 L132 -37 L141 35 L100 35 L83 46 Z M104 26 L123 -3 L127 26 Z"/><path d="M126.5 -38.3 A5 5 0 0 1 126.5 -29.7 M128.5 -41.8 A9 9 0 0 1 128.5 -26.2 M130.5 -45.3 A13 13 0 0 1 130.5 -22.7" stroke="#fff" stroke-opacity="0.045" stroke-width="2" fill="none"/><text x="138" y="35" font-family="Liberation Sans" font-weight="bold" font-size="48" textLength="134" lengthAdjust="spacingAndGlyphs">YOU</text><text x="150" y="53" font-family="Liberation Sans" font-size="17" textLength="105" lengthAdjust="spacingAndGlyphs">VISIT US</text></g><g transform="translate(940,406)" fill="#ffffff" fill-opacity="0.045"><path fill-rule="evenodd" d="M0 35 L24 0 L37 0 L60 35 L48 35 L30.5 9 L13 35 Z M54 35 L66 35 L89 0 L77 0 Z M69 46 L124 -40 L132 -37 L141 35 L100 35 L83 46 Z M104 26 L123 -3 L127 26 Z"/><path d="M126.5 -38.3 A5 5 0 0 1 126.5 -29.7 M128.5 -41.8 A9 9 0 0 1 128.5 -26.2 M130.5 -45.3 A13 13 0 0 1 130.5 -22.7" stroke="#fff" stroke-opacity="0.045" stroke-width="2" fill="none"/><text x="138" y="35" font-family="Liberation Sans" font-weight="bold" font-size="48" textLength="134" lengthAdjust="spacingAndGlyphs">YOU</text><text x="150" y="53" font-family="Liberation Sans" font-size="17" textLength="105" lengthAdjust="spacingAndGlyphs">VISIT US</text></g><g transform="translate(1293,406)" fill="#ffffff" fill-opacity="0.045"><path fill-rule="evenodd" d="M0 35 L24 0 L37 0 L60 35 L48 35 L30.5 9 L13 35 Z M54 35 L66 35 L89 0 L77 0 Z M69 46 L124 -40 L132 -37 L141 35 L100 35 L83 46 Z M104 26 L123 -3 L127 26 Z"/><path d="M126.5 -38.3 A5 5 0 0 1 126.5 -29.7 M128.5 -41.8 A9 9 0 0 1 128.5 -26.2 M130.5 -45.3 A13 13 0 0 1 130.5 -22.7" stroke="#fff" stroke-opacity="0.045" stroke-width="2" fill="none"/><text x="138" y="35" font-family="Liberation Sans" font-weight="bold" font-size="48" textLength="134" lengthAdjust="spacingAndGlyphs">YOU</text><text x="150" y="53" font-family="Liberation Sans" font-size="17" textLength="105" lengthAdjust="spacingAndGlyphs">VISIT US</text></g><g transform="translate(231,581)" fill="#ffffff" fill-opacity="0.045"><path fill-rule="evenodd" d="M0 35 L24 0 L37 0 L60 35 L48 35 L30.5 9 L13 35 Z M54 35 L66 35 L89 0 L77 0 Z M69 46 L124 -40 L132 -37 L141 35 L100 35 L83 46 Z M104 26 L123 -3 L127 26 Z"/><path d="M126.5 -38.3 A5 5 0 0 1 126.5 -29.7 M128.5 -41.8 A9 9 0 0 1 128.5 -26.2 M130.5 -45.3 A13 13 0 0 1 130.5 -22.7" stroke="#fff" stroke-opacity="0.045" stroke-width="2" fill="none"/><text x="138" y="35" font-family="Liberation Sans" font-weight="bold" font-size="48" textLength="134" lengthAdjust="spacingAndGlyphs">YOU</text><text x="150" y="53" font-family="Liberation Sans" font-size="17" textLength="105" lengthAdjust="spacingAndGlyphs">VISIT US</text></g><g transform="translate(582,581)" fill="#ffffff" fill-opacity="0.045"><path fill-rule="evenodd" d="M0 35 L24 0 L37 0 L60 35 L48 35 L30.5 9 L13 35 Z M54 35 L66 35 L89 0 L77 0 Z M69 46 L124 -40 L132 -37 L141 35 L100 35 L83 46 Z M104 26 L123 -3 L127 26 Z"/><path d="M126.5 -38.3 A5 5 0 0 1 126.5 -29.7 M128.5 -41.8 A9 9 0 0 1 128.5 -26.2 M130.5 -45.3 A13 13 0 0 1 130.5 -22.7" stroke="#fff" stroke-opacity="0.045" stroke-width="2" fill="none"/><text x="138" y="35" font-family="Liberation Sans" font-weight="bold" font-size="48" textLength="134" lengthAdjust="spacingAndGlyphs">YOU</text><text x="150" y="53" font-family="Liberation Sans" font-size="17" textLength="105" lengthAdjust="spacingAndGlyphs">VISIT US</text></g><g transform="translate(940,581)" fill="#ffffff" fill-opacity="0.045"><path fill-rule="evenodd" d="M0 35 L24 0 L37 0 L60 35 L48 35 L30.5 9 L13 35 Z M54 35 L66 35 L89 0 L77 0 Z M69 46 L124 -40 L132 -37 L141 35 L100 35 L83 46 Z M104 26 L123 -3 L127 26 Z"/><path d="M126.5 -38.3 A5 5 0 0 1 126.5 -29.7 M128.5 -41.8 A9 9 0 0 1 128.5 -26.2 M130.5 -45.3 A13 13 0 0 1 130.5 -22.7" stroke="#fff" stroke-opacity="0.045" stroke-width="2" fill="none"/><text x="138" y="35" font-family="Liberation Sans" font-weight="bold" font-size="48" textLength="134" lengthAdjust="spacingAndGlyphs">YOU</text><text x="150" y="53" font-family="Liberation Sans" font-size="17" textLength="105" lengthAdjust="spacingAndGlyphs">VISIT US</text></g><g transform="translate(1295,581)" fill="#ffffff" fill-opacity="0.045"><path fill-rule="evenodd" d="M0 35 L24 0 L37 0 L60 35 L48 35 L30.5 9 L13 35 Z M54 35 L66 35 L89 0 L77 0 Z M69 46 L124 -40 L132 -37 L141 35 L100 35 L83 46 Z M104 26 L123 -3 L127 26 Z"/><path d="M126.5 -38.3 A5 5 0 0 1 126.5 -29.7 M128.5 -41.8 A9 9 0 0 1 128.5 -26.2 M130.5 -45.3 A13 13 0 0 1 130.5 -22.7" stroke="#fff" stroke-opacity="0.045" stroke-width="2" fill="none"/><text x="138" y="35" font-family="Liberation Sans" font-weight="bold" font-size="48" textLength="134" lengthAdjust="spacingAndGlyphs">YOU</text><text x="150" y="53" font-family="Liberation Sans" font-size="17" textLength="105" lengthAdjust="spacingAndGlyphs">VISIT US</text></g><g transform="translate(244,763)" fill="#ffffff" fill-opacity="0.045"><path fill-rule="evenodd" d="M0 35 L24 0 L37 0 L60 35 L48 35 L30.5 9 L13 35 Z M54 35 L66 35 L89 0 L77 0 Z M69 46 L124 -40 L132 -37 L141 35 L100 35 L83 46 Z M104 26 L123 -3 L127 26 Z"/><path d="M126.5 -38.3 A5 5 0 0 1 126.5 -29.7 M128.5 -41.8 A9 9 0 0 1 128.5 -26.2 M130.5 -45.3 A13 13 0 0 1 130.5 -22.7" stroke="#fff" stroke-opacity="0.045" stroke-width="2" fill="none"/><text x="138" y="35" font-family="Liberation Sans" font-weight="bold" font-size="48" textLength="134" lengthAdjust="spacingAndGlyphs">YOU</text><text x="150" y="53" font-family="Liberation Sans" font-size="17" textLength="105" lengthAdjust="spacingAndGlyphs">VISIT US</text></g><g transform="translate(590,763)" fill="#ffffff" fill-opacity="0.045"><path fill-rule="evenodd" d="M0 35 L24 0 L37 0 L60 35 L48 35 L30.5 9 L13 35 Z M54 35 L66 35 L89 0 L77 0 Z M69 46 L124 -40 L132 -37 L141 35 L100 35 L83 46 Z M104 26 L123 -3 L127 26 Z"/><path d="M126.5 -38.3 A5 5 0 0 1 126.5 -29.7 M128.5 -41.8 A9 9 0 0 1 128.5 -26.2 M130.5 -45.3 A13 13 0 0 1 130.5 -22.7" stroke="#fff" stroke-opacity="0.045" stroke-width="2" fill="none"/><text x="138" y="35" font-family="Liberation Sans" font-weight="bold" font-size="48" textLength="134" lengthAdjust="spacingAndGlyphs">YOU</text><text x="150" y="53" font-family="Liberation Sans" font-size="17" textLength="105" lengthAdjust="spacingAndGlyphs">VISIT US</text></g><g transform="translate(940,763)" fill="#ffffff" fill-opacity="0.045"><path fill-rule="evenodd" d="M0 35 L24 0 L37 0 L60 35 L48 35 L30.5 9 L13 35 Z M54 35 L66 35 L89 0 L77 0 Z M69 46 L124 -40 L132 -37 L141 35 L100 35 L83 46 Z M104 26 L123 -3 L127 26 Z"/><path d="M126.5 -38.3 A5 5 0 0 1 126.5 -29.7 M128.5 -41.8 A9 9 0 0 1 128.5 -26.2 M130.5 -45.3 A13 13 0 0 1 130.5 -22.7" stroke="#fff" stroke-opacity="0.045" stroke-width="2" fill="none"/><text x="138" y="35" font-family="Liberation Sans" font-weight="bold" font-size="48" textLength="134" lengthAdjust="spacingAndGlyphs">YOU</text><text x="150" y="53" font-family="Liberation Sans" font-size="17" textLength="105" lengthAdjust="spacingAndGlyphs">VISIT US</text></g></g></svg>
</body></html>
